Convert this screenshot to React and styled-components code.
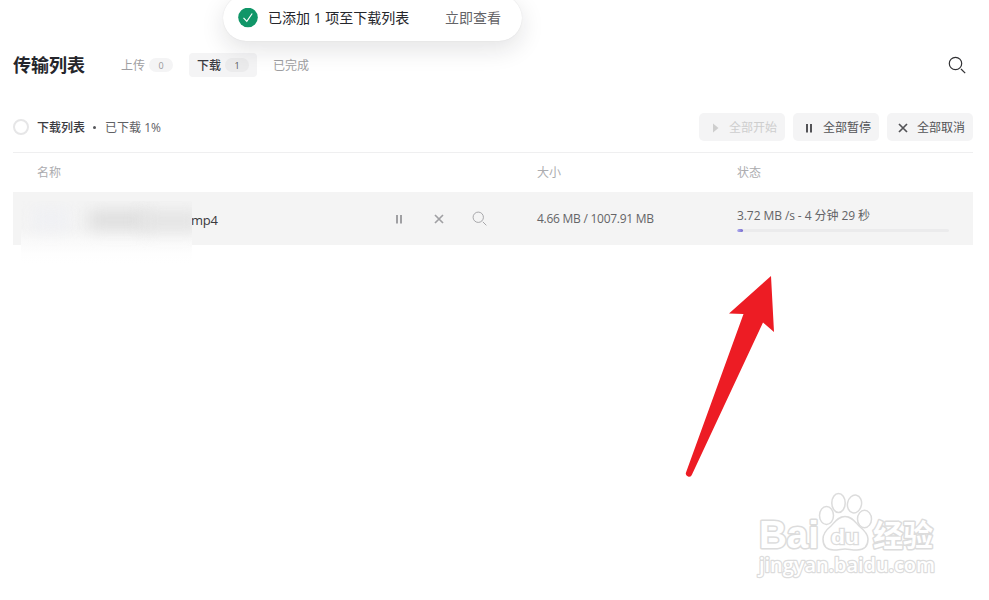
import React from 'react';
import styled, { createGlobalStyle } from 'styled-components';

const Global = createGlobalStyle`
  * { box-sizing: border-box; }
  html, body { margin: 0; background: #fff; overflow: hidden; }
  body { font-family: "Open Sans", "Noto Sans CJK SC", sans-serif; font-size: 12px; color: #25262b; }
  button { font: inherit; border: 0; background: none; padding: 0; }
  svg { display: block; flex: none; }
`;
const Page = styled.main`
  position: relative;
  width: 989px;
  height: 600px;
  padding: 45px 16px 0 13px;
  overflow: hidden;
`;
const Toast = styled.div`
  position: absolute;
  left: 223px;
  top: -5px;
  width: 299px;
  height: 46px;
  border-radius: 23px;
  background: #fff;
  box-shadow: 0 0 1px rgba(28, 28, 32, 0.15), 0 8px 24px rgba(28, 28, 32, 0.12);
  display: flex;
  align-items: center;
  padding: 0 21px 0 15px;
  font-size: 14px;
`;
const ToastText = styled.span`
  margin-left: 10px;
  padding-bottom: 2px;
  white-space: nowrap;
`;
const ToastAction = styled.button`
  margin-left: auto;
  padding-bottom: 2px;
  color: #646468;
`;
const Header = styled.header`
  display: flex;
  align-items: center;
  height: 40px;
`;
const Title = styled.h1`
  margin: 0;
  width: 100px;
  font-size: 18px;
  font-weight: 700;
  line-height: 24px;
  color: #25262b;
`;
const Tab = styled.button`
  display: flex;
  align-items: center;
  height: 24px;
  padding: 0 8px;
  margin-right: 8px;
  border-radius: 4px;
  white-space: nowrap;
  color: ${p => (p.$active ? '#3a3a3f' : '#9e9ea1')};
  background: ${p => (p.$active ? '#f4f4f5' : 'transparent')};
  font-weight: ${p => (p.$active ? 500 : 400)};
`;
const Count = styled.span`
  width: 24px;
  height: 14px;
  margin-left: 4px;
  border-radius: 7px;
  background: ${p => (p.$active ? '#ebebec' : '#f4f4f5')};
  color: ${p => (p.$active ? '#555558' : '#98989b')};
  font-size: 9px;
  line-height: 15px;
  text-align: center;
  font-weight: 400;
`;
const SearchButton = styled.button`
  margin-left: auto;
  margin-right: 7px;
  color: #303033;
`;
const Toolbar = styled.section`
  display: flex;
  align-items: center;
  height: 28px;
  margin-top: 28px;
  gap: 8px;
`;
const Radio = styled.span`
  width: 16px;
  height: 16px;
  border: 2px solid #e6e6e7;
  border-radius: 50%;
`;
const ListName = styled.span`
  color: #3a3a3f;
  font-weight: 500;
`;
const Dot = styled.span`
  width: 3px;
  height: 3px;
  margin-right: 1px;
  border-radius: 50%;
  background: #55565a;
`;
const Progress = styled.span`
  flex: 1;
  padding-bottom: 1px;
  color: #606064;
`;
const BulkButton = styled.button`
  width: 86px;
  height: 28px;
  border-radius: 5px;
  background: #f4f4f5;
  color: ${p => (p.$disabled ? '#cecece' : '#535357')};
  display: flex;
  align-items: center;
  padding: 0 0 1px 10px;
  gap: 8px;
  white-space: nowrap;

  svg { position: relative; top: 1px; }
`;
const Columns = styled.div`
  display: grid;
  grid-template-columns: 500px 200px 1fr;
  align-items: center;
  padding-left: 24px;
`;
const TableHead = styled(Columns)`
  margin-top: 11px;
  height: 40px;
  padding-bottom: 2px;
  border-top: 1px solid #efeff0;
  color: #acacaf;
`;
const FileRow = styled(Columns)`
  position: relative;
  height: 53px;
  background: #f4f4f4;
  color: #646467;
`;
const FileCell = styled.div`
  display: flex;
  align-items: center;
  padding-left: 154px;
  height: 53px;
`;
const FileName = styled.span`
  width: 200px;
  padding-top: 2px;
  font-size: 13px;
  letter-spacing: -0.2px;
  color: #3a3a3d;
`;
const Actions = styled.div`
  display: flex;
  gap: 24px;
  color: #a0a0a3;
`;
const Size = styled.span`
  letter-spacing: -0.26px;
  white-space: nowrap;
`;
const Status = styled.div`
  width: 212px;
  padding-top: 3px;
`;
const Speed = styled.div`
  line-height: 16px;
  white-space: nowrap;
  letter-spacing: -0.08px;
`;
const Track = styled.div`
  margin-top: 5px;
  height: 3px;
  border-radius: 2px;
  background: #ebebec;
  overflow: hidden;
`;
const Bar = styled.div`
  height: 3px;
  border-radius: 2px;
  background: linear-gradient(90deg, #b5b3f1, #7367ce);
`;
const Mask = styled.div`
  position: absolute;
  left: 8px;
  top: 9px;
  width: 171px;
  height: 62px;
  overflow: hidden;
  background: linear-gradient(#f4f4f4 0, #f4f4f4 44%, #fafafa 66%, #fefefe 86%, #fff 100%);
`;
const Smudge = styled.i`
  position: absolute;
  left: ${p => p.$x}px;
  top: ${p => p.$y}px;
  width: ${p => p.$w}px;
  height: ${p => p.$h}px;
  background: ${p => p.$color};
  filter: blur(8px);
`;
const Arrow = styled.svg`
  position: absolute;
  left: 670px;
  top: 260px;
`;
const Watermark = styled.svg`
  position: absolute;
  left: 740px;
  top: 480px;
`;

const CheckIcon = () => (
  <svg width="20" height="20" viewBox="0 0 20 20">
    <circle cx="10" cy="9.5" r="9.8" fill="#109668" />
    <path d="M5.5 9.8 8.8 13.300 14.2 5.5" fill="none" stroke="#fff" strokeWidth="1.2" />
  </svg>
);
const SearchIcon = ({ size = 18, weight = 1.2 }) => (
  <svg width={size} height={size} viewBox="0 0 18 18" fill="none" stroke="currentColor" strokeWidth={weight}>
    <circle cx="7.5" cy="7.5" r="6.2" />
    <path d="m13 13 4.2 4.2" />
  </svg>
);
const PlayIcon = () => (
  <svg width="12" height="12" viewBox="0 0 12 12"><path d="M4 1.500 9.500 6 4 10.500Z" fill="currentColor" /></svg>
);
const PauseIcon = () => (
  <svg width="12" height="12" viewBox="0 0 12 12"><path d="M3 2h2v8.500H3zM7 2h2v8.500H7z" fill="currentColor" /></svg>
);
const CloseIcon = () => (
  <svg width="12" height="12" viewBox="0 0 12 12"><path d="m2 2 8 8M10 2 2 10" fill="none" stroke="currentColor" strokeWidth="1.7" /></svg>
);
const ActionSlot = styled.button`
  width: 16px;
  height: 16px;
  display: grid;
  place-items: center;
  color: inherit;
`;

export default function App() {
  return (
    <>
      <Global />
      <Page>
        <Toast>
          <CheckIcon />
          <ToastText>已添加 1 项至下载列表</ToastText>
          <ToastAction>立即查看</ToastAction>
        </Toast>
        <Header>
          <Title>传输列表</Title>
          <Tab>上传<Count>0</Count></Tab>
          <Tab $active>下载<Count $active>1</Count></Tab>
          <Tab>已完成</Tab>
          <SearchButton><SearchIcon /></SearchButton>
        </Header>
        <Toolbar>
          <Radio />
          <ListName>下载列表</ListName>
          <Dot />
          <Progress>已下载 1%</Progress>
          <BulkButton $disabled><PlayIcon />全部开始</BulkButton>
          <BulkButton><PauseIcon />全部暂停</BulkButton>
          <BulkButton><CloseIcon />全部取消</BulkButton>
        </Toolbar>
        <TableHead><span>名称</span><span>大小</span><span>状态</span></TableHead>
        <FileRow>
          <FileCell>
            <FileName>mp4</FileName>
            <Actions>
              <ActionSlot><PauseIcon /></ActionSlot>
              <ActionSlot><CloseIcon /></ActionSlot>
              <ActionSlot><SearchIcon size={15} weight={1.1} /></ActionSlot>
            </Actions>
          </FileCell>
          <Size>4.66 MB / 1007.91 MB</Size>
          <Status>
            <Speed>3.72 MB /s - 4 分钟 29 秒</Speed>
            <Track><Bar style={{ width: 6 }} /></Track>
          </Status>
          <Mask>
            <Smudge $x={12} $y={8} $w={36} $h={20} $color="#eff0f4" />
            <Smudge $x={68} $y={10} $w={60} $h={18} $color="#dcdcdc" />
            <Smudge $x={120} $y={10} $w={60} $h={20} $color="#e3e3e3" />
          </Mask>
        </FileRow>
        <Arrow width="130" height="230" viewBox="0 0 130 230">
          <path d="M101 16 104 72 93 62.5 22 214.5A3 3 0 0 1 16 212.5L73.5 54 59 53.5Z" fill="#ed1c24" />
        </Arrow>
        <Watermark width="220" height="110" viewBox="0 0 220 110" fill="#fff" stroke="#dcdcdc" strokeWidth="1.5">
          <g fontFamily="Liberation Sans, Noto Sans CJK SC, sans-serif" fontWeight="700" paintOrder="stroke" strokeWidth="3" strokeLinejoin="round">
            <text x="19" y="67.5" fontSize="38" textLength="60" lengthAdjust="spacingAndGlyphs">Bai</text>
            <text x="133" y="66" fontSize="30" textLength="60" lengthAdjust="spacingAndGlyphs">经验</text>
            <text x="19" y="92" fontFamily="Open Sans, sans-serif" fontWeight="600" fontSize="20" textLength="176" lengthAdjust="spacingAndGlyphs" strokeWidth="2.4">jingyan.baidu.com</text>
          </g>
          <ellipse cx="86.5" cy="35.5" rx="7" ry="9" />
          <ellipse cx="98.5" cy="23" rx="6.7" ry="9.5" />
          <ellipse cx="114.5" cy="24" rx="7" ry="9" transform="rotate(12 114.5 24)" />
          <ellipse cx="124.5" cy="39" rx="7" ry="8.7" />
          <path d="M105 36.500C98 36.500 95 42 91 46C86 50 83 54 83 59C83 66 87 70 94 70C99 70 101 69 105 69C109 69 111 70 117 70C124 70 128 66 128 59C128 54 124 50 119 46C115 42 112 36.500 105 36.500Z" />
          <text x="91" y="64" fontFamily="Liberation Sans, sans-serif" fontWeight="700" fontSize="21" textLength="28" lengthAdjust="spacingAndGlyphs" paintOrder="stroke" strokeWidth="2.6">du</text>
        </Watermark>
      </Page>
    </>
  );
}
